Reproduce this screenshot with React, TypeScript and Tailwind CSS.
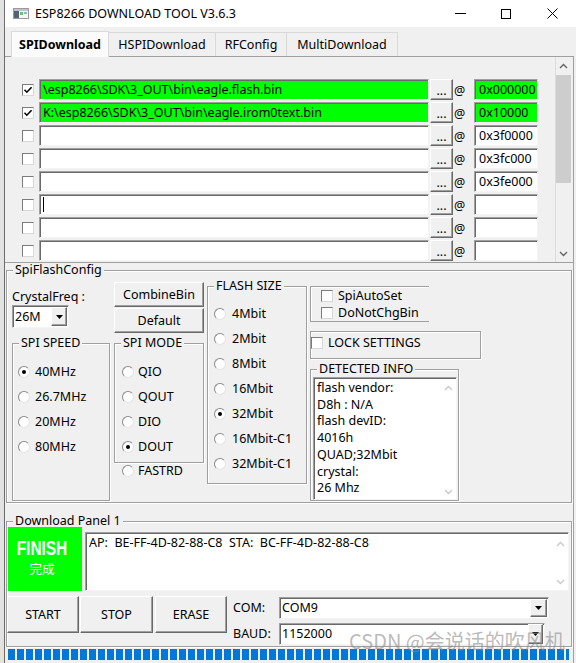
import React from 'react';

const etched = 'border border-[#a0a0a0] shadow-[inset_1px_1px_0_#fff,1px_1px_0_#fff]';
const sunken =
  'border border-t-[#a0a0a0] border-l-[#a0a0a0] border-r-[#f4f4f4] border-b-[#f4f4f4] shadow-[inset_1px_1px_0_#696969]';
const raised =
  'border border-t-white border-l-white border-r-[#696969] border-b-[#696969] bg-[#f0f0f0] shadow-[inset_-1px_-1px_0_#a0a0a0]';

const files = [
  { on: true, path: '\\esp8266\\SDK\\3_OUT\\bin\\eagle.flash.bin', addr: '0x000000' },
  { on: true, path: 'K:\\esp8266\\SDK\\3_OUT\\bin\\eagle.irom0text.bin', addr: '0x10000' },
  { on: false, path: '', addr: '0x3f0000' },
  { on: false, path: '', addr: '0x3fc000' },
  { on: false, path: '', addr: '0x3fe000' },
  { on: false, path: '', addr: '', caret: true },
  { on: false, path: '', addr: '' },
  { on: false, path: '', addr: '' },
];

const detected = ['flash vendor:', 'D8h : N/A', 'flash devID:', '4016h', 'QUAD;32Mbit', 'crystal:', '26 Mhz'];

function Check({ checked = false }: { checked?: boolean }) {
  return (
    <span className="flex h-3 w-3 shrink-0 items-center justify-center border border-t-[#7c7c7c] border-l-[#7c7c7c] border-r-[#d8d8d8] border-b-[#d8d8d8] bg-white">
      {checked && (
        <svg width="10" height="10" viewBox="0 0 10 10">
          <path d="M1.5 4.8 3.8 7.2 8.6 2.2" fill="none" stroke="#000" strokeWidth="1.6" />
        </svg>
      )}
    </span>
  );
}

function Radio({ checked = false }: { checked?: boolean }) {
  return (
    <span className="flex h-3 w-3 shrink-0 items-center justify-center rounded-full border border-t-[#8a8a8a] border-l-[#8a8a8a] border-r-[#e4e4e4] border-b-[#e4e4e4] bg-white">
      {checked && <span className="h-[4px] w-[4px] rounded-full bg-black" />}
    </span>
  );
}

function Chevron({ up = false, color }: { up?: boolean; color: string }) {
  return (
    <svg width="9" height="6" viewBox="0 0 9 6">
      <path d={up ? 'M1 5 4.5 1.5 8 5' : 'M1 1 4.5 4.5 8 1'} fill="none" stroke={color} strokeWidth="1.3" />
    </svg>
  );
}

function Combo({ value, className = '', btn = 'h-[18px] w-[17px]' }: { value: string; className?: string; btn?: string }) {
  return (
    <div className={`flex items-center bg-white pl-[2px] ${sunken} ${className}`}>
      <span className="flex-1">{value}</span>
      <span className={`mr-px flex items-center justify-center ${raised} ${btn}`}>
        <svg width="7" height="4" viewBox="0 0 7 4">
          <path d="M0 0h7L3.5 4z" fill="#000" />
        </svg>
      </span>
    </div>
  );
}

function Btn({ className = '', children }: { className?: string; children: React.ReactNode }) {
  return <div className={`flex items-center justify-center ${raised} ${className}`}>{children}</div>;
}

function Group({
  label,
  className = '',
  lead = 'leading-[14px]',
  children,
}: {
  label: string;
  className?: string;
  lead?: string;
  children: React.ReactNode;
}) {
  return (
    <fieldset className={`${etched} ${className}`}>
      <legend className={`ml-[6px] bg-[#f0f0f0] px-[2px] ${lead}`}>{label}</legend>
      {children}
    </fieldset>
  );
}

function RadioRow({ label, checked = false, gap = 'gap-[5px]' }: { label: string; checked?: boolean; gap?: string }) {
  return (
    <div className={`flex h-[25px] items-center ${gap}`}>
      <Radio checked={checked} />
      <span>{label}</span>
    </div>
  );
}

function TitleBar() {
  return (
    <div className="flex h-[27px] items-center bg-white">
      <svg className="ml-[8px]" width="16" height="11" viewBox="0 0 16 11">
        <rect x="0.5" y="0.5" width="15" height="10" fill="#f6f6f6" stroke="#9a9a9a" />
        <rect x="1" y="1" width="14" height="2" fill="#b8c4d4" />
        <rect x="1" y="3" width="5" height="7" fill="#4f6672" />
        <rect x="7" y="4" width="3" height="3" fill="#6cc070" />
        <rect x="11" y="4" width="3" height="2" fill="#9ab0c8" />
      </svg>
      <span className="ml-[6px] text-black">ESP8266 DOWNLOAD TOOL V3.6.3</span>
      <div className="ml-auto flex h-full">
        <div className="flex w-[45px] items-center justify-center">
          <svg width="11" height="1" viewBox="0 0 11 1">
            <rect width="11" height="1" fill="#000" />
          </svg>
        </div>
        <div className="flex w-[45px] items-center justify-center">
          <svg width="10" height="10" viewBox="0 0 10 10">
            <rect x="0.5" y="0.5" width="9" height="9" fill="none" stroke="#000" />
          </svg>
        </div>
        <div className="flex w-[48px] items-center justify-center">
          <svg width="11" height="11" viewBox="0 0 11 11">
            <path d="M0.5 0.5 10.5 10.5M10.5 0.5 0.5 10.5" stroke="#000" strokeWidth="1" />
          </svg>
        </div>
      </div>
    </div>
  );
}

function Tabs() {
  const tabs = [
    { t: 'HSPIDownload', w: 'w-[108px]' },
    { t: 'RFConfig', w: 'w-[72px]' },
    { t: 'MultiDownload', w: 'w-[112px]' },
  ];
  return (
    <div className="flex h-[29px] items-end pl-[6px]">
      <div className="relative z-10 -mb-px flex h-[26px] w-[98px] items-center justify-center border border-b-0 border-[#d9d9d9] bg-[#fbfbfb] font-bold">
        SPIDownload
      </div>
      {tabs.map((x) => (
        <div
          key={x.t}
          className={`-ml-px flex h-[24px] items-center justify-center border border-b-0 border-[#d9d9d9] bg-[#f0f0f0] ${x.w}`}
        >
          {x.t}
        </div>
      ))}
    </div>
  );
}

function FileList() {
  return (
    <div className="flex h-[206px] border-b border-[#a0a0a0]">
      <div className="flex flex-1 flex-col gap-[2px] overflow-hidden pt-[22px]">
        {files.map((f, i) => (
          <div key={i} className="flex h-[21px] shrink-0 items-center">
            <span className="ml-[17px]">
              <Check checked={f.on} />
            </span>
            <div
              className={`ml-[5px] flex h-full w-[390px] items-center whitespace-pre pl-[3px] ${sunken} ${
                f.on ? 'bg-[#00ff00]' : 'bg-white'
              }`}
            >
              {f.path}
              {f.caret && <span className="h-[15px] w-px bg-black" />}
            </div>
            <div className={`ml-px flex h-full w-[23px] items-end justify-center pb-[3px] leading-[10px] ${raised}`}>...</div>
            <span className="w-[21px] pl-px pt-[2px]">@</span>
            <div className={`flex h-full w-[64px] items-center pl-[4px] ${sunken} ${f.on ? 'bg-[#00ff00]' : 'bg-white'}`}>
              {f.addr}
            </div>
          </div>
        ))}
      </div>
      <div className="flex w-[18px] flex-col border-l border-[#dcdcdc] bg-[#f0f0f0]">
        <div className="flex h-[18px] items-center justify-center pr-[2px]">
          <Chevron up color="#606060" />
        </div>
        <div className="h-[108px] w-[15px] bg-[#cdcdcd]" />
        <div className="flex-1" />
        <div className="flex h-[17px] items-center justify-center pr-[2px]">
          <Chevron color="#606060" />
        </div>
      </div>
    </div>
  );
}

function SpiFlashConfig() {
  return (
    <Group label="SpiFlashConfig" className="ml-px w-[566px]">
      <div className="flex h-[225px] pl-[5px] pb-px">
        <div className="flex w-[98px] flex-col">
          <div className="mt-[13px]">CrystalFreq :</div>
          <Combo value="26M" className="mt-px h-[23px] w-[57px]" btn="h-[19px] w-[16px]" />
          <Group label="SPI SPEED" className="mt-[8px] flex-1">
            <div className="pl-[5px] pt-[9px]">
              <RadioRow label="40MHz" checked />
              <RadioRow label="26.7MHz" />
              <RadioRow label="20MHz" />
              <RadioRow label="80MHz" />
            </div>
          </Group>
        </div>

        <div className="ml-[4px] flex w-[90px] flex-col">
          <Btn className="mt-[5px] h-[25px]">CombineBin</Btn>
          <Btn className="mt-px h-[25px]">Default</Btn>
          <Group label="SPI MODE" className="mt-[3px]">
            <div className="pb-[3px] pl-[7px] pt-[9px]">
              <RadioRow label="QIO" gap="gap-[4px]" />
              <RadioRow label="QOUT" gap="gap-[4px]" />
              <RadioRow label="DIO" gap="gap-[4px]" />
              <RadioRow label="DOUT" checked gap="gap-[4px]" />
            </div>
          </Group>
          <div className="flex h-[16px] items-center gap-[4px] pl-[8px]">
            <Radio />
            <span>FASTRD</span>
          </div>
        </div>

        <div className="ml-[3px] w-[100px]">
          <Group label="FLASH SIZE" className="mt-[2px]">
            <div className="pb-[7px] pl-[6px] pt-[8px]">
              <RadioRow label="4Mbit" gap="gap-[6px]" />
              <RadioRow label="2Mbit" gap="gap-[6px]" />
              <RadioRow label="8Mbit" gap="gap-[6px]" />
              <RadioRow label="16Mbit" gap="gap-[6px]" />
              <RadioRow label="32Mbit" checked gap="gap-[6px]" />
              <RadioRow label="16Mbit-C1" gap="gap-[6px]" />
              <RadioRow label="32Mbit-C1" gap="gap-[6px]" />
            </div>
          </Group>
        </div>

        <div className="ml-[3px] flex w-[171px] flex-col">
          <div className="mt-[9px] h-[36px] w-[119px] border-t border-l border-b border-[#a0a0a0] pl-[10px] shadow-[inset_1px_1px_0_#fff]">
            <div className="flex h-[17px] items-center gap-[5px]">
              <Check />
              <span>SpiAutoSet</span>
            </div>
            <div className="flex h-[17px] items-center gap-[5px]">
              <Check />
              <span>DoNotChgBin</span>
            </div>
          </div>
          <div className={`mt-[9px] flex h-[28px] items-start gap-[5px] pt-[5px] ${etched}`}>
            <Check />
            <span className="leading-[12px]">LOCK SETTINGS</span>
          </div>
          <Group label="DETECTED INFO" className="mt-[3px] w-[149px] flex-1">
            <div className={`ml-[2px] mt-px flex h-[123px] w-[144px] bg-white ${sunken}`}>
              <div className="flex-1 pl-[3px] pt-[2px] leading-[16.7px]">
                {detected.map((l) => (
                  <div key={l}>{l}</div>
                ))}
              </div>
              <div className="flex w-[15px] flex-col items-center justify-between pb-[4px] pt-[7px]">
                <Chevron up color="#c8c8c8" />
                <Chevron color="#c8c8c8" />
              </div>
            </div>
          </Group>
        </div>
      </div>
    </Group>
  );
}

function DownloadPanel() {
  return (
    <Group label="Download Panel 1" lead="leading-[12px]" className="ml-px mt-[12px] w-[566px]">
      <div className="flex items-end">
        <div className="ml-px flex h-[64px] w-[74px] flex-col items-center bg-[#00ff00] pr-[6px] pt-[11px] text-white">
          <span className="block scale-x-[0.79] font-['Liberation_Sans',sans-serif] text-[19.5px] font-bold leading-[20px]">
            FINISH
          </span>
          <span className="mt-[4px] font-['Noto_Sans_CJK_SC',sans-serif] text-[12.5px] leading-[14px]">完成</span>
        </div>
        <div className={`ml-[3px] flex h-[59px] w-[484px] bg-white ${sunken}`}>
          <div className="flex-1 whitespace-pre pl-[3px] pt-[2px] leading-[16px]">
            AP:  BE-FF-4D-82-88-C8  STA:  BC-FF-4D-82-88-C8
          </div>
          <div className="flex w-[15px] flex-col items-center justify-between pb-[5px] pt-[8px]">
            <Chevron up color="#c8c8c8" />
            <Chevron color="#c8c8c8" />
          </div>
        </div>
      </div>
      <div className="mt-[5px] flex pb-px">
        <Btn className="h-[37px] w-[72px]">START</Btn>
        <Btn className="ml-px h-[37px] w-[73px]">STOP</Btn>
        <Btn className="ml-[2px] h-[37px] w-[72px]">ERASE</Btn>
        <div className="ml-[6px] flex flex-col">
          <div className="mt-px flex h-[22px] items-center">
            <span className="w-[46px]">COM:</span>
            <Combo value="COM9" className="h-[22px] w-[270px]" />
          </div>
          <div className="mt-[4px] flex h-[22px] items-center">
            <span className="w-[46px]">BAUD:</span>
            <Combo value="1152000" className="h-[22px] w-[266px]" btn="h-[20px] w-[15px]" />
          </div>
        </div>
      </div>
    </Group>
  );
}

function Progress() {
  return (
    <div className="ml-[3px] mt-[2px] flex h-[11px] w-[561px] gap-[2px] overflow-hidden">
      {Array.from({ length: 63 }).map((_, i) => (
        <span key={i} className="h-full w-[7px] shrink-0 bg-[#0078d7]" />
      ))}
    </div>
  );
}

export default function App() {
  return (
    <div className="relative flex h-[663px] w-[576px] overflow-hidden bg-[#f0f0f0] font-['Noto_Sans','Noto_Sans_CJK_SC',sans-serif] text-[12.5px] leading-[14px] text-black">
      <div className="w-[4px] bg-[#e2e2e2]" />
      <div className="flex flex-1 flex-col border-l border-[#6d6d6d]">
        <TitleBar />
        <Tabs />
        <div className="flex w-[569px] flex-1 flex-col border-t border-r border-[#a0a0a0]">
          <FileList />
          <SpiFlashConfig />
          <DownloadPanel />
          <Progress />
        </div>
      </div>
      <div className="pointer-events-none absolute left-[349px] top-[629px] font-['Noto_Sans_CJK_SC',sans-serif] text-[20px] leading-[24px] text-[#8c8c8c]/60">
        CSDN @会说话的吹风机
      </div>
    </div>
  );
}
